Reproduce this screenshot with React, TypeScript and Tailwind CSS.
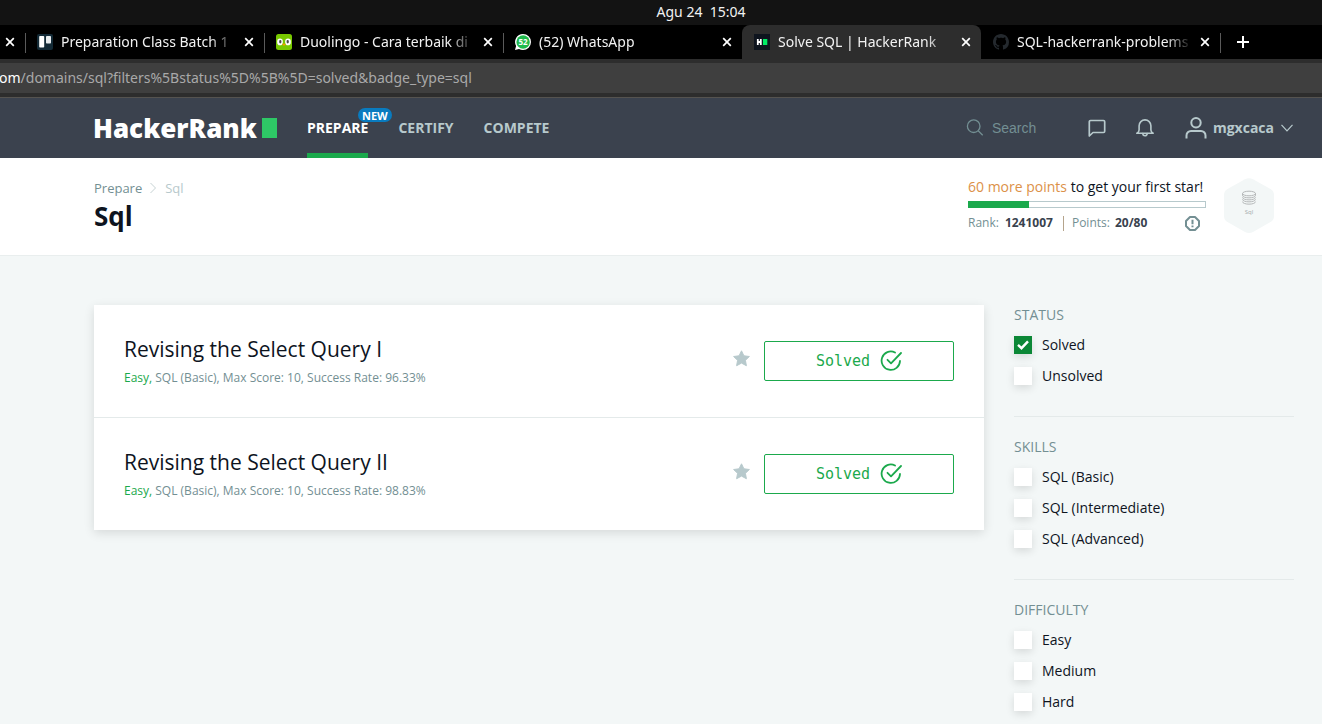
import { useState, type ReactNode } from "react";

type TabProps = { title: string; icon: ReactNode; active?: boolean; divider?: boolean };

function CloseIcon() {
  return (
    <svg viewBox="0 0 10 10" className="size-[10px]" stroke="#ffffff" strokeWidth="1.7">
      <path d="M1.2 1.2 8.8 8.8M8.8 1.2 1.2 8.8" />
    </svg>
  );
}

function Tab({ title, icon, active, divider }: TabProps) {
  return (
    <div
      className={`relative flex h-full w-[239px] shrink-0 items-center gap-2 pl-3 pr-[10px] ${
        active ? "rounded-t-lg bg-[#2d2d2d]" : ""
      }`}
    >
      {icon}
      <span className="min-w-0 flex-1 overflow-hidden whitespace-nowrap text-[14px] leading-5 text-[#f2f2f2] [mask-image:linear-gradient(to_right,black_85%,transparent)]">
        {title}
      </span>
      <button type="button" aria-label={`Close ${title}`} className="flex size-[10px] items-center justify-center">
        <CloseIcon />
      </button>
      {divider && <span className="absolute -right-px top-2 h-5 w-px bg-[#5a5a5a]" />}
    </div>
  );
}

function TrelloIcon() {
  return (
    <svg viewBox="0 0 16 16" className="size-4 shrink-0">
      <rect width="16" height="16" rx="2" fill="#132a36" />
      <rect x="2.2" y="2" width="5" height="11.5" rx="0.8" fill="#fff" />
      <rect x="9" y="2" width="5" height="7.5" rx="0.8" fill="#e8ecee" />
    </svg>
  );
}

function DuolingoIcon() {
  return (
    <svg viewBox="0 0 16 16" className="size-4 shrink-0">
      <rect width="16" height="16" rx="2.5" fill="#78c800" />
      <rect x="1.2" y="4.4" width="5.6" height="6.8" rx="2.8" fill="#fff" />
      <rect x="9.2" y="4.4" width="5.6" height="6.8" rx="2.8" fill="#fff" />
      <rect x="3.2" y="6" width="2.2" height="3.4" rx="1.1" fill="#4b4b4b" />
      <rect x="10.6" y="6" width="2.2" height="3.4" rx="1.1" fill="#4b4b4b" />
      <path d="M6 9.8h4L8 12z" fill="#ff9600" />
    </svg>
  );
}

function WhatsAppIcon() {
  return (
    <svg viewBox="0 0 16 16" className="size-4 shrink-0">
      <path d="M8 0a8 8 0 0 1 0 16c-1.5 0-2.8-.4-4-1L0 16l1.1-4A8 8 0 0 1 8 0z" fill="#fff" />
      <circle cx="8.1" cy="8" r="6.7" fill="#1fb94b" />
      <text x="8" y="11" textAnchor="middle" fontSize="8" fontWeight="700" fill="#fff" fontFamily="Open Sans, sans-serif">
        52
      </text>
    </svg>
  );
}

function HackerRankIcon() {
  return (
    <svg viewBox="0 0 16 16" className="size-4 shrink-0">
      <rect width="16" height="16" fill="#0e141e" />
      <path d="M3.8 5v6M6.8 5v6M3.8 8h3" stroke="#fff" strokeWidth="1.8" />
      <rect x="9" y="5" width="4.3" height="6" fill="#00ea64" />
    </svg>
  );
}

function GithubIcon() {
  return (
    <svg viewBox="0 0 16 16" className="size-4 shrink-0" fill="#24292e">
      <path d="M8 0C3.58 0 0 3.58 0 8c0 3.54 2.29 6.53 5.47 7.59.4.07.55-.17.55-.38 0-.19-.01-.82-.01-1.49-2.01.37-2.53-.49-2.69-.94-.09-.23-.48-.94-.82-1.13-.28-.15-.68-.52-.01-.53.63-.01 1.08.58 1.23.82.72 1.21 1.87.87 2.33.66.07-.52.28-.87.51-1.07-1.78-.2-3.64-.89-3.64-3.95 0-.87.31-1.59.82-2.15-.08-.2-.36-1.02.08-2.12 0 0 .67-.21 2.2.82.64-.18 1.32-.27 2-.27s1.36.09 2 .27c1.53-1.04 2.2-.82 2.2-.82.44 1.1.16 1.92.08 2.12.51.56.82 1.27.82 2.15 0 3.07-1.87 3.75-3.65 3.95.29.25.54.73.54 1.48 0 1.07-.01 1.93-.01 2.2 0 .21.15.46.55.38A8.01 8.01 0 0 0 16 8c0-4.42-3.58-8-8-8z" />
    </svg>
  );
}

function BrowserChrome() {
  return (
    <div className="font-['Noto_Sans','Open_Sans',sans-serif]">
      <div className="flex h-[25px] items-center justify-center bg-[#131313] pl-20 text-[14px] leading-5 text-[#f2f2f2]">
        <span className="whitespace-pre pb-[2px]">Agu 24  15:04</span>
      </div>
      <div className="flex h-[34px] items-center overflow-hidden bg-black">
        <div className="relative flex h-full w-[25px] shrink-0 items-center pl-[5px]">
          <button type="button" aria-label="Close tab">
            <CloseIcon />
          </button>
          <span className="absolute -right-px top-2 h-5 w-px bg-[#5a5a5a]" />
        </div>
        <Tab title="Preparation Class Batch 1" icon={<TrelloIcon />} divider />
        <Tab title="Duolingo - Cara terbaik di" icon={<DuolingoIcon />} divider />
        <Tab title="(52) WhatsApp" icon={<WhatsAppIcon />} />
        <Tab title="Solve SQL | HackerRank" icon={<HackerRankIcon />} active />
        <Tab title="SQL-hackerrank-problems" icon={<GithubIcon />} divider />
        <button type="button" aria-label="New tab" className="ml-[17px]">
          <svg viewBox="0 0 12 12" className="size-3" stroke="#fff" strokeWidth="2">
            <path d="M6 0v12M0 6h12" />
          </svg>
        </button>
      </div>
      <div className="border-b border-[#555350] bg-[#2d2d2d] py-1">
        <div className="-ml-px h-[30px] overflow-hidden whitespace-nowrap bg-[#3f3f3f] text-[14px] leading-[30px] text-[#a9a9a9]">
          <span className="text-white">om</span>/domains/sql?filters%5Bstatus%5D%5B%5D=solved&amp;badge_type=sql
        </div>
      </div>
    </div>
  );
}

function NavBar() {
  return (
    <header className="flex h-[60px] items-center bg-[#3b424e] pl-[93px] pr-[29px]">
      <a href="#home" className="flex w-[184px] items-center justify-between text-[26px] font-extrabold leading-[30px] text-white">
        HackerRank
        <span className="h-5 w-[15px] bg-[#2ec866]" />
      </a>
      <nav className="ml-[30px] flex h-full gap-[30px] text-[14px] font-bold text-[#b7c9cc]">
        <a href="#prepare" className="relative flex items-center border-b-[5px] border-[#1ba94c] pt-[3px] text-white">
          PREPARE
          <span className="absolute left-[51px] top-[10px] flex h-[14px] items-center rounded-full bg-[#097bbf] px-1 text-[11px] leading-none">
            NEW
          </span>
        </a>
        <a href="#certify" className="flex items-center pb-[2px]">CERTIFY</a>
        <a href="#compete" className="flex items-center pb-[2px]">COMPETE</a>
      </nav>
      <div className="ml-auto flex items-center">
        <label className="flex items-center gap-2">
          <svg viewBox="0 0 18 18" className="size-[18px]" fill="none" stroke="#738f93" strokeWidth="1.3">
            <circle cx="7.7" cy="7.2" r="6.3" />
            <path d="m12.2 11.7 4.5 4.5" />
          </svg>
          <input
            type="search"
            placeholder="Search"
            aria-label="Search"
            className="w-[95px] bg-transparent font-['Liberation_Sans',sans-serif] text-[14px] leading-5 text-white outline-none placeholder:text-[#738f93]"
          />
        </label>
        <button type="button" aria-label="Messages">
          <svg viewBox="0 0 20 20" className="size-5" fill="none" stroke="#b7c9cc" strokeWidth="1.7" strokeLinejoin="round">
            <path d="M3.5 2.5h13a1.2 1.2 0 0 1 1.2 1.2v9.6a1.2 1.2 0 0 1-1.2 1.2H6L2.3 18V3.7a1.2 1.2 0 0 1 1.2-1.2z" />
          </svg>
        </button>
        <button type="button" aria-label="Notifications" className="ml-7">
          <svg viewBox="0 0 20 20" className="size-5" fill="none" stroke="#b7c9cc" strokeWidth="1.6" strokeLinejoin="round" strokeLinecap="round">
            <path d="M1.8 15.2h16.4c-1.5-.6-2.3-1.6-2.3-3.1V7.8A5.9 5.9 0 0 0 4.1 7.8v4.3c0 1.5-.8 2.5-2.3 3.1z" />
            <path d="M7.8 15.6a2.2 2.2 0 0 0 4.4 0" />
          </svg>
        </button>
        <button type="button" className="ml-[30px] flex items-center text-[14px] font-bold text-[#b7c9cc]">
          <svg viewBox="0 0 22 24" className="mr-1.5 h-6 w-[22px]" fill="none" stroke="#b7c9cc" strokeWidth="2">
            <circle cx="11" cy="6.7" r="4.7" />
            <path d="M1.5 22.5v-3a4.5 4.5 0 0 1 4.5-4.5h10a4.5 4.5 0 0 1 4.5 4.5v3" />
          </svg>
          <span className="pb-[2px]">mgxcaca</span>
          <svg viewBox="0 0 12 8" className="ml-[7px] h-2 w-3" fill="none" stroke="#b7c9cc" strokeWidth="1.2">
            <path d="m.5.8 5.5 6 5.5-6" />
          </svg>
        </button>
      </div>
    </header>
  );
}

function PageHeader() {
  return (
    <section className="flex h-[98px] items-start justify-between border-b border-[#e9eeee] bg-white pl-[94px] pr-12 pt-5">
      <div>
        <div className="flex items-center text-[13px] leading-5 text-[#738f93]">
          <a href="#prepare">Prepare</a>
          <svg viewBox="0 0 6 12" className="ml-2 mr-[9px] h-3 w-[6px]" fill="none" stroke="#c6d2d3">
            <path d="m.5 1 5 5-5 5" />
          </svg>
          <span className="text-[#b7c9cc]">Sql</span>
        </div>
        <h1 className="text-[26px] font-bold leading-9 text-[#0e141e]">Sql</h1>
      </div>
      <div className="flex">
        <div className="w-[238px]">
          <p className="whitespace-nowrap text-[14px] leading-[18px] text-[#0e141e]">
            <span className="text-[#dc9148]">60 more points</span> to get your first star!
          </p>
          <div role="progressbar" aria-label="Points" aria-valuenow={20} aria-valuemax={80} className="mt-[5px] h-[7px] border border-[#b7c9cc]">
            <div className="-ml-px -mt-px h-[7px] w-[61px] bg-[#1ba94c]" />
          </div>
          <div className="mt-[5px] flex items-center text-[12px] leading-5 text-[#738f93]">
            Rank:<b className="ml-[6px] text-[#39424e]">1241007</b>
            <span className="ml-[10px] mr-2 h-[15px] w-px bg-[#b5a48c]" />
            Points:<b className="ml-[5px] text-[#39424e]">20/80</b>
            <button type="button" aria-label="Points details" className="ml-auto mr-[6px]">
              <svg viewBox="0 0 15 15" className="size-[15px]" fill="none" stroke="#738f93" strokeWidth="2">
                <path d="M5 1h5l4 4v5l-4 4H5l-4-4V5z" strokeLinejoin="round" />
                <path d="M7.5 3.7v4.5M7.5 9.5v1.8" />
              </svg>
            </button>
          </div>
        </div>
        <svg viewBox="0 0 50 56" className="ml-[18px] h-14 w-[50px]">
          <path d="M21 1.2q4-2 8 0L46.5 11q3.5 2 3.5 6v21q0 4-3.5 6L29 54q-4 2-8 0L3.5 44Q0 42 0 38V17q0-4 3.5-6z" fill="#f3f7f7" />
          <g fill="none" stroke="#b5b8b9">
            <ellipse cx="25" cy="15.5" rx="6.5" ry="2.3" />
            <path d="M18.5 17.3c0 3.4 13 3.4 13 0M18.5 19.3c0 3.4 13 3.4 13 0M18.5 21.3c0 3.4 13 3.4 13 0M18.5 23.6c0 3.4 13 3.4 13 0" />
            <path d="M18.5 15.5v2M31.5 15.5v2" />
          </g>
          <text x="25" y="36" textAnchor="middle" fontSize="6" fill="#a5abad">Sql</text>
        </svg>
      </div>
    </section>
  );
}

function Challenge({ title, rate }: { title: string; rate: string }) {
  return (
    <article className="flex items-center bg-white px-[30px] py-[30px]">
      <div className="min-w-0 flex-1 pb-px">
        <h2 className="text-[21px] leading-7 text-[#0e141e]">{title}</h2>
        <p className="mt-[7px] text-[12px] leading-4 text-[#738f93]">
          <span className="text-[#1ba94c]">Easy,</span> SQL (Basic), Max Score: 10, Success Rate: {rate}
        </p>
      </div>
      <button type="button" aria-label={`Bookmark ${title}`} className="mr-[14px] pb-[5px]">
        <svg viewBox="0 0 17 17" className="size-[17px]" fill="#b7c9cc" stroke="#b7c9cc" strokeWidth="1" strokeLinejoin="round">
          <path d="m8.5.8 2.4 5 5.5.7-4 3.8 1 5.4-4.9-2.6-4.9 2.6 1-5.4-4-3.8 5.5-.7z" />
        </svg>
      </button>
      <button
        type="button"
        className="flex h-10 w-[190px] items-center justify-center gap-[10px] rounded-[2px] border border-[#1ba94c] font-['DejaVu_Sans_Mono',monospace] text-[15px] text-[#1ba94c]"
      >
        <span className="pt-px">Solved</span>
        <svg viewBox="0 0 22 22" className="size-[22px]" fill="none" stroke="#1ba94c" strokeWidth="1.8" strokeLinecap="round" strokeLinejoin="round">
          <path d="M15 2.5A9.2 9.2 0 1 0 20 11" />
          <path d="m7.5 9.8 3.5 3.5L21 3" />
        </svg>
      </button>
    </article>
  );
}

const filters = [
  { name: "STATUS", options: ["Solved", "Unsolved"] },
  { name: "SKILLS", options: ["SQL (Basic)", "SQL (Intermediate)", "SQL (Advanced)"] },
  { name: "DIFFICULTY", options: ["Easy", "Medium", "Hard"] },
];

function Filters() {
  const [selected, setSelected] = useState<string[]>(["Solved"]);
  const toggle = (o: string) =>
    setSelected((s) => (s.includes(o) ? s.filter((x) => x !== o) : [...s, o]));
  return (
    <aside className="w-[280px] shrink-0 text-[14px]">
      {filters.map((group) => (
        <fieldset key={group.name} className="mb-5 border-b border-[#e4eaea] pb-[25px] last:mb-0 last:border-0 last:pb-0">
          <legend className="mb-1 leading-5 text-[#738f93]">{group.name}</legend>
          {group.options.map((option) => (
            <label key={option} className="flex h-[31px] items-center gap-[10px] text-[#0e141e]">
              <span className="relative flex size-[18px]">
                <input
                  type="checkbox"
                  checked={selected.includes(option)}
                  onChange={() => toggle(option)}
                  className="peer size-[18px] appearance-none bg-white shadow-[0_3px_8px_rgba(0,0,0,0.12)] checked:bg-[#0b8736]"
                />
                <svg viewBox="0 0 18 18" className="pointer-events-none absolute inset-0 hidden size-[18px] peer-checked:block" fill="none" stroke="#fff" strokeWidth="2.4">
                  <path d="m4 8.9 3.5 3.3L14 5.4" />
                </svg>
              </span>
              {option}
            </label>
          ))}
        </fieldset>
      ))}
    </aside>
  );
}

export default function App() {
  return (
    <div className="min-h-screen overflow-hidden bg-[#f3f7f7] font-['Open_Sans','Noto_Sans',sans-serif]">
      <BrowserChrome />
      <NavBar />
      <PageHeader />
      <main className="flex items-start gap-[30px] pb-[6px] pl-[94px] pr-7 pt-[49px]">
        <div className="min-w-0 flex-1 divide-y divide-[#e4eaea] shadow-[0_3px_10px_rgba(0,0,0,0.12)]">
          <Challenge title="Revising the Select Query I" rate="96.33%" />
          <Challenge title="Revising the Select Query II" rate="98.83%" />
        </div>
        <Filters />
      </main>
    </div>
  );
}
